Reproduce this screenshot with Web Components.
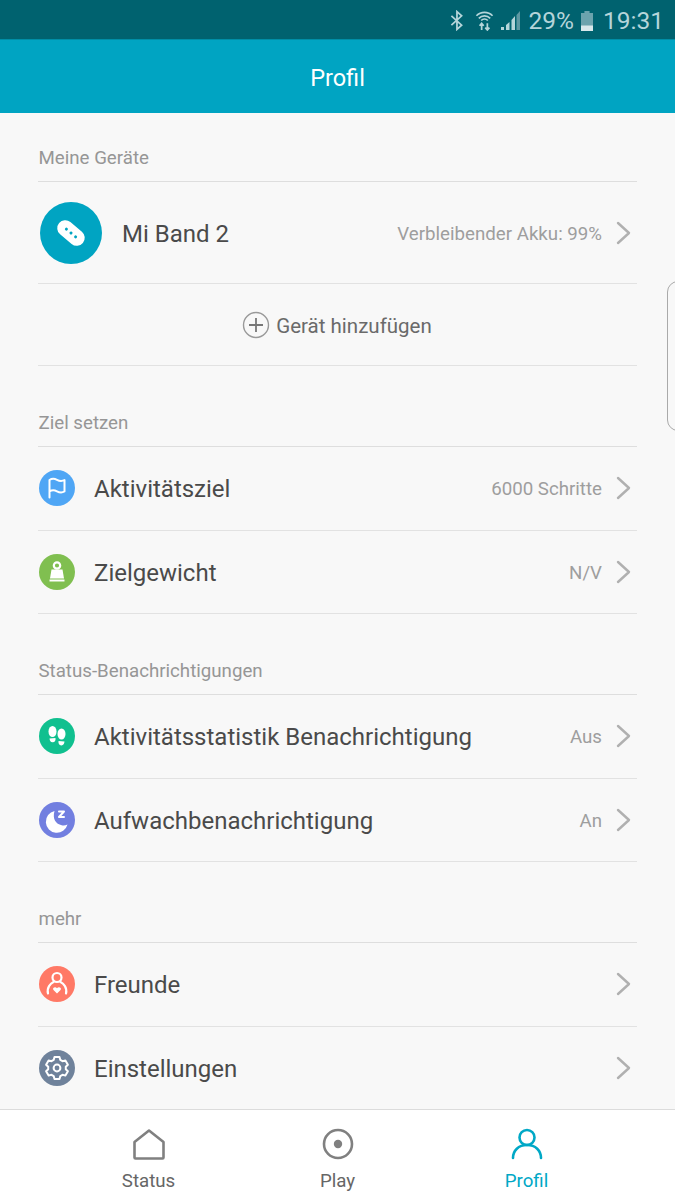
<!DOCTYPE html>
<html lang="de">
<head>
<meta charset="utf-8">
<title>Profil</title>
<style>
  html, body { margin: 0; height: 1200px; overflow: hidden; }
  body {
    display: flex;
    flex-direction: column;
    background: #f8f8f8;
    font-family: Roboto, "Noto Sans", sans-serif;
  }
  svg { display: block; }
</style>
</head>
<body>
<status-bar></status-bar>
<app-header>Profil</app-header>
<page-body>
  <settings-section heading="Meine Geräte" first>
    <device-row name="Mi Band 2" value="Verbleibender Akku: 99%"></device-row>
    <add-device>Gerät hinzufügen</add-device>
  </settings-section>

  <settings-section heading="Ziel setzen">
    <settings-row label="Aktivitätsziel" value="6000 Schritte" color="#4fa6f5">
      <svg slot="icon" viewBox="0 0 36 36" width="36" height="36" fill="none" stroke="#fff" stroke-width="2" stroke-linejoin="round" stroke-linecap="round">
        <path d="M10.500 27.500V10c2.800-2 5.300-1.400 7.500-.2s4.800 1.700 7.500.2v11.500c-2.700 1.500-5.300 1-7.500-.2s-4.700-1.800-7.500.2"/>
      </svg>
    </settings-row>
    <settings-row label="Zielgewicht" value="N/V" color="#80bf50">
      <svg slot="icon" viewBox="0 0 36 36" width="36" height="36" fill="#fff">
        <path d="M12.500 15.500h11l1.500 9H11z"/>
        <path d="M10.500 25.500h15v2h-15z"/>
        <circle cx="18" cy="11.500" r="3.200" fill="none" stroke="#fff" stroke-width="2.200"/>
      </svg>
    </settings-row>
  </settings-section>

  <settings-section heading="Status-Benachrichtigungen">
    <settings-row label="Aktivitätsstatistik Benachrichtigung" value="Aus" color="#10c08f">
      <svg slot="icon" viewBox="0 0 36 36" width="36" height="36" fill="#fff">
        <ellipse cx="13.500" cy="13.500" rx="4" ry="5.500"/>
        <path d="M10.500 20.500l6-.6c.3 2.500-.5 4.300-2.800 4.400-2 .1-3-1.500-3.200-3.800z"/>
        <ellipse cx="22.500" cy="16" rx="4" ry="5.500"/>
        <path d="M19.500 23l6 .6c-.2 2.300-1.200 3.900-3.200 3.800-2.300-.1-3.100-1.900-2.800-4.400z"/>
      </svg>
    </settings-row>
    <settings-row label="Aufwachbenachrichtigung" value="An" color="#727fe0">
      <svg slot="icon" viewBox="0 0 36 36" width="36" height="36">
        <path fill="#fff" d="M15.500 9a11 11 0 1 0 13 13.500c-1.800.8-3.800 1.100-5.800.7-5.800-1.100-9.500-6.200-7.200-14.200z"/>
        <path fill="none" stroke="#fff" stroke-width="2" stroke-linejoin="round" stroke-linecap="round" d="M20 9.500h5l-5 5.500h5"/>
      </svg>
    </settings-row>
  </settings-section>

  <settings-section heading="mehr">
    <settings-row label="Freunde" color="#ff7966">
      <svg slot="icon" viewBox="0 0 36 36" width="36" height="36" fill="none" stroke="#fff" stroke-width="2.200" stroke-linecap="round">
        <circle cx="18" cy="11.500" r="4.500"/>
        <path d="M9 27.500c-1.500-6 2.500-10 5.500-11.500M27 27.500c1.500-6-2.500-10-5.500-11.500"/>
        <path stroke="none" fill="#fff" d="M18 27.500l-3.500-3.500c-1.600-2 1.700-4 3.500-1.800 1.800-2.200 5.100-.2 3.500 1.800z"/>
      </svg>
    </settings-row>
    <settings-row label="Einstellungen" color="#6f829b">
      <svg slot="icon" viewBox="0 0 36 36" width="36" height="36" fill="none" stroke="#fff" stroke-width="2" stroke-linejoin="round">
        <path d="M15.500 8h5l.8 2.900 2.200 1.300 2.900-.8 2.500 4.300-2.100 2.100v2.400l2.100 2.100-2.500 4.300-2.900-.8-2.200 1.300-.8 2.900h-5l-.8-2.900-2.200-1.300-2.900.8-2.500-4.300 2.100-2.100v-2.400L7.100 15.700l2.500-4.300 2.900.8 2.200-1.300z" transform="translate(0 -1)"/>
        <circle cx="18" cy="18" r="3.400"/>
      </svg>
    </settings-row>
  </settings-section>
</page-body>
<bottom-nav>
  <nav-item label="Status">
    <svg slot="icon" viewBox="0 0 32 32" width="32" height="32" fill="none" stroke="#808080" stroke-width="2.600" stroke-linejoin="round">
      <path d="M16 2.500L30.500 14v15.500a1 1 0 0 1-1 1h-27a1 1 0 0 1-1-1V14z"/>
    </svg>
  </nav-item>
  <nav-item label="Play">
    <svg slot="icon" viewBox="0 0 32 32" width="32" height="32" fill="none" stroke="#808080" stroke-width="2.600">
      <circle cx="16" cy="16" r="14"/>
      <circle cx="16" cy="16" r="4.200" fill="#808080" stroke="none"/>
    </svg>
  </nav-item>
  <nav-item label="Profil" active>
    <svg slot="icon" viewBox="0 0 32 32" width="32" height="32" fill="none" stroke="#00a8c6" stroke-width="2.600" stroke-linecap="round">
      <circle cx="16" cy="9.500" r="7.500"/>
      <path d="M2 30c0-7.500 5.500-13 14-13s14 5.500 14 13"/>
    </svg>
  </nav-item>
</bottom-nav>
<edge-handle></edge-handle>

<template id="chevron">
  <svg viewBox="0 0 16 24" width="16" height="24" fill="none" stroke="#b0b0b0" stroke-width="2.400" stroke-linecap="round" stroke-linejoin="round"><path d="M2 2l11 10L2 22"/></svg>
</template>

<script>
const chevron = document.getElementById('chevron').innerHTML;

class StatusBar extends HTMLElement {
  constructor() {
    super();
    this.attachShadow({ mode: 'open' }).innerHTML = `
    <style>
      :host {
        display: flex;
        flex: none;
        align-items: center;
        justify-content: flex-end;
        box-sizing: border-box;
        height: 39px;
        padding: 2px 11px 0 0;
        background: #00626f;
        color: #b5d5da;
        font: 24.500px Roboto, sans-serif;
      }
      svg { display: block; }
      .blue { margin-right: 12px; }
      .wifi { margin-right: 7px; }
      .signal { margin-right: 9px; }
      .batt { margin: 0 10px 0 7px; }
    </style>
    <svg class="blue" viewBox="0 0 14 22" width="13" height="21" fill="none" stroke="#b5d5da" stroke-width="1.900"><path d="M1.500 6l11 10-5 4.500V1.500l5 4.500-11 10"/></svg>
    <svg class="wifi" viewBox="0 0 20 22" width="19" height="21" fill="none" stroke="#b5d5da" stroke-width="1.800">
      <path d="M1.500 6a12 12 0 0 1 17 0M4 8.700a8.500 8.500 0 0 1 12 0M6.500 11a5 5 0 0 1 7 0"/>
      <path d="M7 14v7M4.800 16.500L7 14l2.200 2.500M13 21v-7M10.800 18.500L13 21l2.200-2.500"/>
    </svg>
    <svg class="signal" viewBox="0 0 19 19" width="19" height="19">
      <path fill="#b5d5da" d="M0 19h3v-3H0zM5 19h3.500V11L5 14zM10.500 19H14V5l-3.500 4z"/>
      <path fill="#5d98a2" d="M15.500 19H19V0l-3.500 4z"/>
    </svg>
    <span>29%</span>
    <svg class="batt" viewBox="0 0 14 21" width="12" height="20" preserveAspectRatio="none">
      <path fill="#6ba3ad" d="M4 0h6v2h4v13H0V2h4z"/>
      <path fill="#d8e8eb" d="M0 15h14v6H0z"/>
    </svg>
    <span>19:31</span>`;
  }
}

class AppHeader extends HTMLElement {
  constructor() {
    super();
    this.attachShadow({ mode: 'open' }).innerHTML = `
    <style>
      :host {
        display: flex;
        flex: none;
        align-items: center;
        justify-content: center;
        box-sizing: border-box;
        height: 74px;
        padding-top: 2px;
        border-top: 1px solid #008ea6;
        background: #00a4c2;
        color: #fff;
        font: 23.500px Roboto, sans-serif;
      }
    </style>
    <slot></slot>`;
  }
}

class PageBody extends HTMLElement {
  constructor() {
    super();
    this.attachShadow({ mode: 'open' }).innerHTML = `
    <style>
      :host {
        display: block;
        flex: 1;
        min-height: 0;
        overflow: hidden;
        padding: 0 38px;
      }
    </style>
    <slot></slot>`;
  }
}

class SettingsSection extends HTMLElement {
  constructor() {
    super();
    const top = this.hasAttribute('first') ? 68 : 80;
    this.attachShadow({ mode: 'open' }).innerHTML = `
    <style>
      :host { display: block; }
      h2 {
        display: flex;
        align-items: flex-end;
        height: ${top - 12}px;
        margin: 0;
        padding: 0 0 12px 0.500px;
        border-bottom: 1px solid #dedede;
        color: #969696;
        font: 400 18.700px/22px Roboto, sans-serif;
      }
    </style>
    <h2>${this.getAttribute('heading')}</h2>
    <slot></slot>`;
  }
}

class SettingsRow extends HTMLElement {
  constructor() {
    super();
    const value = this.getAttribute('value') || '';
    this.attachShadow({ mode: 'open' }).innerHTML = `
    <style>
      :host {
        display: flex;
        align-items: center;
        height: 82.500px;
        border-bottom: 1px solid #e2e2e2;
      }
      .icon {
        flex: none;
        width: 36px;
        height: 36px;
        border-radius: 50%;
        margin: 0 19px 0 1px;
        background: ${this.getAttribute('color')};
      }
      .label { flex: 1; color: #4a4a4a; font-size: 24px; padding-top: 2px; }
      .value { color: #9e9e9e; font-size: 18.700px; margin-right: 14px; padding-top: 2px; }
      .chev { margin-right: 5px; }
      svg { display: block; }
    </style>
    <div class="icon"><slot name="icon"></slot></div>
    <span class="label">${this.getAttribute('label')}</span>
    <span class="value">${value}</span>
    <span class="chev">${chevron}</span>`;
  }
}

class DeviceRow extends HTMLElement {
  constructor() {
    super();
    this.attachShadow({ mode: 'open' }).innerHTML = `
    <style>
      :host {
        display: flex;
        align-items: center;
        height: 101px;
        border-bottom: 1px solid #e2e2e2;
      }
      .icon { flex: none; margin: 0 20px 0 2px; }
      .name { flex: 1; color: #4a4a4a; font-size: 24px; padding-top: 2px; }
      .value { color: #9e9e9e; font-size: 18.700px; margin-right: 14px; padding-top: 2px; }
      .chev { margin-right: 5px; }
      svg { display: block; }
    </style>
    <svg class="icon" viewBox="0 0 62 62" width="62" height="62">
      <circle cx="31" cy="31" r="31" fill="#00a4c2"/>
      <rect x="15.500" y="23" width="31" height="16" rx="8" fill="#fff" transform="rotate(40 31 31)"/>
      <g fill="#00a4c2" transform="rotate(40 31 31)">
        <circle cx="25" cy="31" r="1.500"/><circle cx="31" cy="31" r="1.500"/><circle cx="37" cy="31" r="1.500"/>
      </g>
    </svg>
    <span class="name">${this.getAttribute('name')}</span>
    <span class="value">${this.getAttribute('value')}</span>
    <span class="chev">${chevron}</span>`;
  }
}

class AddDevice extends HTMLElement {
  constructor() {
    super();
    this.attachShadow({ mode: 'open' }).innerHTML = `
    <style>
      :host {
        display: flex;
        align-items: center;
        justify-content: center;
        gap: 6px;
        height: 81px;
        border-bottom: 1px solid #e2e2e2;
        color: #6a6a6a;
        font-size: 20.500px;
      }
      span { padding-top: 2px; }
      svg { display: block; margin-left: -1px; }
    </style>
    <svg viewBox="0 0 28 28" width="28" height="28" fill="none" stroke="#777" stroke-width="1.400">
      <circle cx="14" cy="14" r="12.500" stroke="#999"/>
      <path d="M14 7v14M7 14h14" stroke-width="1.800"/>
    </svg>
    <span><slot></slot></span>`;
  }
}

class BottomNav extends HTMLElement {
  constructor() {
    super();
    this.attachShadow({ mode: 'open' }).innerHTML = `
    <style>
      :host {
        display: grid;
        flex: none;
        grid-template-columns: repeat(3, 189px);
        box-sizing: border-box;
        height: 91px;
        padding: 0 54px;
        background: #fff;
        border-top: 1px solid #dcdcdc;
      }
    </style>
    <slot></slot>`;
  }
}

class NavItem extends HTMLElement {
  constructor() {
    super();
    const color = this.hasAttribute('active') ? '#00a8c6' : '#666';
    this.attachShadow({ mode: 'open' }).innerHTML = `
    <style>
      :host {
        display: flex;
        flex-direction: column;
        align-items: center;
        padding-top: 18px;
        gap: 10px;
        color: ${color};
        font-size: 18.700px;
        line-height: 22px;
      }
    </style>
    <slot name="icon"></slot>
    <span>${this.getAttribute('label')}</span>`;
  }
}

// sliver of the floating side panel at the right edge
class EdgeHandle extends HTMLElement {
  constructor() {
    super();
    this.attachShadow({ mode: 'open' }).innerHTML = `
    <style>
      :host {
        position: absolute;
        top: 281px;
        right: -14px;
        box-sizing: border-box;
        width: 22px;
        height: 150px;
        border: 1px solid #aaa;
        border-radius: 12px;
      }
    </style>`;
  }
}

customElements.define('status-bar', StatusBar);
customElements.define('app-header', AppHeader);
customElements.define('page-body', PageBody);
customElements.define('settings-section', SettingsSection);
customElements.define('settings-row', SettingsRow);
customElements.define('device-row', DeviceRow);
customElements.define('add-device', AddDevice);
customElements.define('bottom-nav', BottomNav);
customElements.define('nav-item', NavItem);
customElements.define('edge-handle', EdgeHandle);
</script>
</body>
</html>
